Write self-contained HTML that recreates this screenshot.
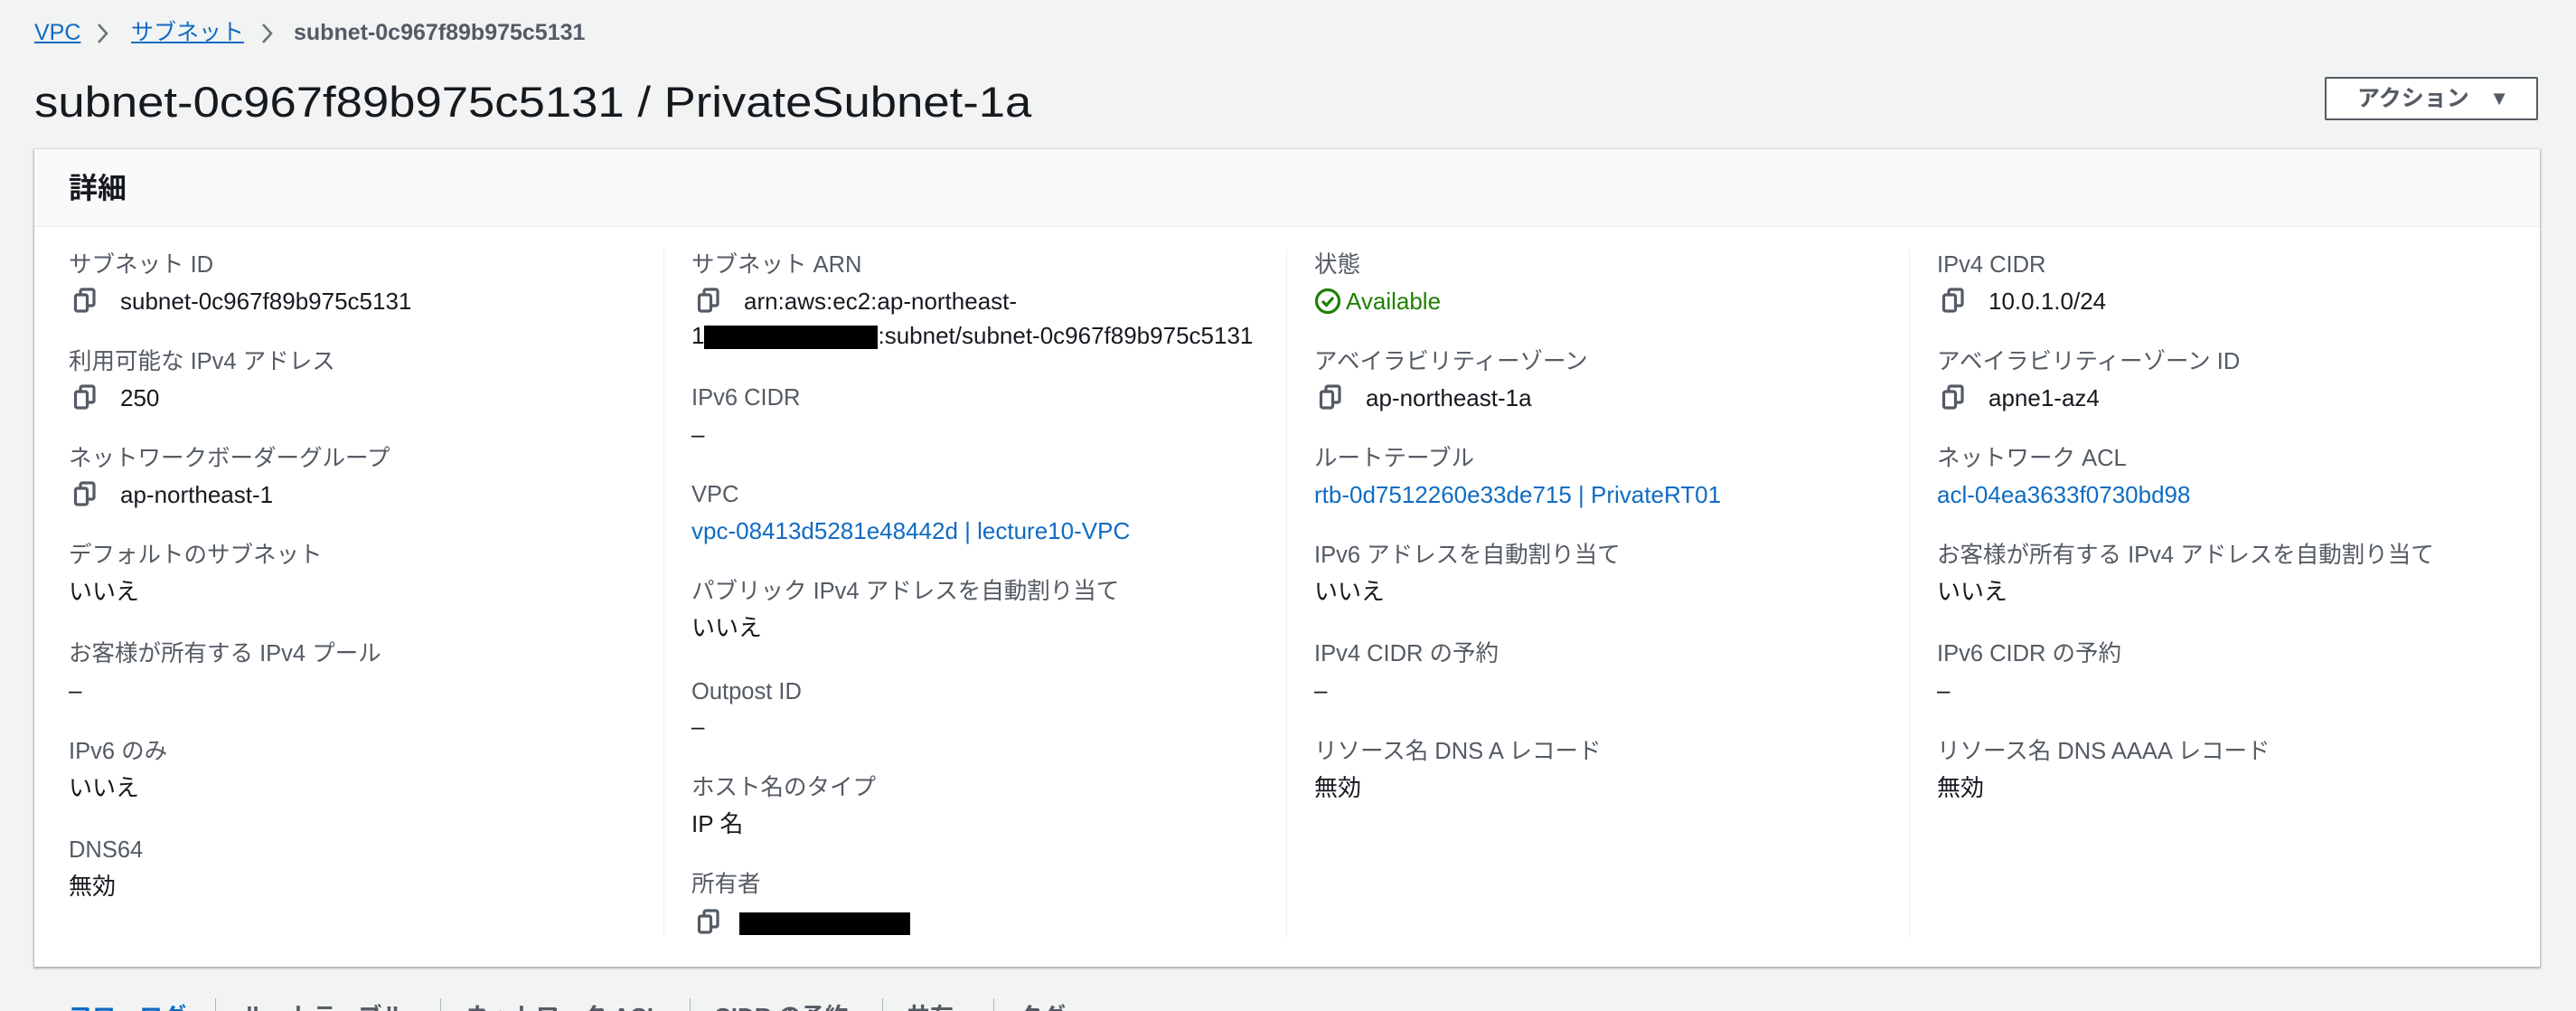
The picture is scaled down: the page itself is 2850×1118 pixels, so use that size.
<!DOCTYPE html>
<html style="width:2850px;height:1118px;overflow:hidden"><head><meta charset="utf-8"><style>
*{margin:0;padding:0;box-sizing:border-box}
body{width:2850px;height:1118px;background:#f2f3f3;font-family:"Liberation Sans","Noto Sans CJK JP",sans-serif;color:#16191f;position:relative;overflow:hidden}
.a{position:absolute;white-space:nowrap;line-height:36px;font-size:26px}
.l{color:#545b64;font-size:25.5px}
.lk{color:#0f6bc2}
.ci{position:absolute;width:26px;height:28px}
.card{position:absolute;left:38px;top:165px;width:2772px;height:904px;background:#fff;box-shadow:0 1px 2px 1px rgba(0,28,36,.3)}
.hd{position:absolute;left:0;top:0;width:100%;height:86px;background:#fafafa;border-bottom:1px solid #eaeded}
.sep{position:absolute;top:111px;width:1px;height:760px;background:#eaeded}
.blk{position:absolute;background:#000}
.tb{position:absolute;top:1106px;font-size:26px;font-weight:bold;color:#545b64;white-space:nowrap;line-height:36px}
.ts{position:absolute;top:1104px;width:1px;height:14px;background:#aab7b8}
</style></head><body>
<div class="a" style="left:38px;top:18px;font-size:25px"><span class="lk" style="text-decoration:underline">VPC</span></div>
<svg style="position:absolute;left:106px;top:25px" width="14" height="24"><path d="M3 2l9 10-9 10" fill="none" stroke="#687078" stroke-width="2.5"/></svg>
<div class="a" style="left:145px;top:18px;font-size:25px"><span class="lk" style="text-decoration:underline">サブネット</span></div>
<svg style="position:absolute;left:288px;top:25px" width="14" height="24"><path d="M3 2l9 10-9 10" fill="none" stroke="#687078" stroke-width="2.5"/></svg>
<div class="a" style="left:325px;top:18px;font-size:25px;color:#545b64;font-weight:bold">subnet-0c967f89b975c5131</div>
<div class="a" style="left:38px;top:85px;font-size:47px;line-height:56px;transform:scaleX(1.12);transform-origin:left">subnet-0c967f89b975c5131 / PrivateSubnet-1a</div>
<div style="position:absolute;left:2572px;top:85px;width:236px;height:48px;border:2px solid #545b64;border-radius:2px;background:#fff;font-size:25px;font-weight:bold;color:#545b64;line-height:44px;padding-left:34px">アクション <span style="position:absolute;right:30px;font-size:22px">▼</span></div>
<div class="card"><div class="hd"><div class="a" style="left:38px;top:23px;font-size:32px;font-weight:bold;line-height:40px">詳細</div></div>
<div class="sep" style="left:696px"></div><div class="sep" style="left:1385px"></div><div class="sep" style="left:2074px"></div>
</div>
<svg width="0" height="0" style="position:absolute"><defs><g id="cp"><rect x="8" y="2" width="15" height="18" rx="2" fill="none" stroke="#545b64" stroke-width="3.2"/><rect x="2.5" y="8" width="13" height="18" rx="2" fill="#fff" stroke="#545b64" stroke-width="3.2"/></g></defs></svg>

<!-- col1 -->
<div class="a l" style="left:76px;top:275px">サブネット ID</div>
<svg class="ci" style="left:81px;top:318px"><use href="#cp"/></svg><div class="a" style="left:133px;top:315px">subnet-0c967f89b975c5131</div>
<div class="a l" style="left:76px;top:382px">利用可能な IPv4 アドレス</div>
<svg class="ci" style="left:81px;top:425px"><use href="#cp"/></svg><div class="a" style="left:133px;top:422px">250</div>
<div class="a l" style="left:76px;top:489px">ネットワークボーダーグループ</div>
<svg class="ci" style="left:81px;top:532px"><use href="#cp"/></svg><div class="a" style="left:133px;top:529px">ap-northeast-1</div>
<div class="a l" style="left:76px;top:596px">デフォルトのサブネット</div>
<div class="a" style="left:76px;top:636px">いいえ</div>
<div class="a l" style="left:76px;top:705px">お客様が所有する IPv4 プール</div>
<div class="a" style="left:76px;top:745px">–</div>
<div class="a l" style="left:76px;top:813px">IPv6 のみ</div>
<div class="a" style="left:76px;top:853px">いいえ</div>
<div class="a l" style="left:76px;top:922px">DNS64</div>
<div class="a" style="left:76px;top:962px">無効</div>
<!-- col2 -->
<div class="a l" style="left:765px;top:275px">サブネット ARN</div>
<svg class="ci" style="left:771px;top:318px"><use href="#cp"/></svg><div class="a" style="left:823px;top:315px">arn:aws:ec2:ap-northeast-</div>
<div class="a" style="left:765px;top:353px">1<span style="display:inline-block;width:192px;height:26px;background:#000;vertical-align:middle"></span>:subnet/subnet-0c967f89b975c5131</div>
<div class="a l" style="left:765px;top:422px">IPv6 CIDR</div>
<div class="a" style="left:765px;top:462px">–</div>
<div class="a l" style="left:765px;top:529px">VPC</div>
<div class="a lk" style="left:765px;top:569px">vpc-08413d5281e48442d | lecture10-VPC</div>
<div class="a l" style="left:765px;top:636px">パブリック IPv4 アドレスを自動割り当て</div>
<div class="a" style="left:765px;top:676px">いいえ</div>
<div class="a l" style="left:765px;top:747px">Outpost ID</div>
<div class="a" style="left:765px;top:785px">–</div>
<div class="a l" style="left:765px;top:853px">ホスト名のタイプ</div>
<div class="a" style="left:765px;top:893px">IP 名</div>
<div class="a l" style="left:765px;top:960px">所有者</div>
<svg class="ci" style="left:771px;top:1005px"><use href="#cp"/></svg><div class="blk" style="left:818px;top:1009px;width:189px;height:25px"></div>
<!-- col3 -->
<div class="a l" style="left:1454px;top:275px">状態</div>
<svg style="position:absolute;left:1454px;top:318px" width="30" height="30"><circle cx="15" cy="15" r="12.5" fill="none" stroke="#1d8102" stroke-width="3.2"/><path d="M9 15l4.5 4.5L21 11" fill="none" stroke="#1d8102" stroke-width="3.2"/></svg>
<div class="a" style="left:1489px;top:315px;color:#1d8102">Available</div>
<div class="a l" style="left:1454px;top:382px">アベイラビリティーゾーン</div>
<svg class="ci" style="left:1459px;top:425px"><use href="#cp"/></svg><div class="a" style="left:1511px;top:422px">ap-northeast-1a</div>
<div class="a l" style="left:1454px;top:489px">ルートテーブル</div>
<div class="a lk" style="left:1454px;top:529px">rtb-0d7512260e33de715 | PrivateRT01</div>
<div class="a l" style="left:1454px;top:596px">IPv6 アドレスを自動割り当て</div>
<div class="a" style="left:1454px;top:636px">いいえ</div>
<div class="a l" style="left:1454px;top:705px">IPv4 CIDR の予約</div>
<div class="a" style="left:1454px;top:745px">–</div>
<div class="a l" style="left:1454px;top:813px">リソース名 DNS A レコード</div>
<div class="a" style="left:1454px;top:853px">無効</div>
<!-- col4 -->
<div class="a l" style="left:2143px;top:275px">IPv4 CIDR</div>
<svg class="ci" style="left:2148px;top:318px"><use href="#cp"/></svg><div class="a" style="left:2200px;top:315px">10.0.1.0/24</div>
<div class="a l" style="left:2143px;top:382px">アベイラビリティーゾーン ID</div>
<svg class="ci" style="left:2148px;top:425px"><use href="#cp"/></svg><div class="a" style="left:2200px;top:422px">apne1-az4</div>
<div class="a l" style="left:2143px;top:489px">ネットワーク ACL</div>
<div class="a lk" style="left:2143px;top:529px">acl-04ea3633f0730bd98</div>
<div class="a l" style="left:2143px;top:596px">お客様が所有する IPv4 アドレスを自動割り当て</div>
<div class="a" style="left:2143px;top:636px">いいえ</div>
<div class="a l" style="left:2143px;top:705px">IPv6 CIDR の予約</div>
<div class="a" style="left:2143px;top:745px">–</div>
<div class="a l" style="left:2143px;top:813px">リソース名 DNS AAAA レコード</div>
<div class="a" style="left:2143px;top:853px">無効</div>
<!-- tabs -->
<div class="tb" style="left:76px;color:#0f6bc2">フローログ</div>
<div class="ts" style="left:238px"></div>
<div class="tb" style="left:268px">ルートテーブル</div>
<div class="ts" style="left:487px"></div>
<div class="tb" style="left:515px">ネットワーク ACL</div>
<div class="ts" style="left:763px"></div>
<div class="tb" style="left:790px">CIDR の予約</div>
<div class="ts" style="left:976px"></div>
<div class="tb" style="left:1003px">共有</div>
<div class="ts" style="left:1099px"></div>
<div class="tb" style="left:1127px">タグ</div>
</body></html>
